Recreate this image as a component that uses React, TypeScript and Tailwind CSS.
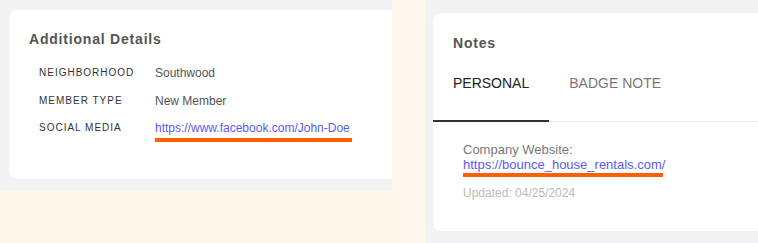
import React from "react";

const font = { fontFamily: '"Liberation Sans", Arial, sans-serif' };

function Row({ label, children }: { label: string; children: React.ReactNode }) {
  return (
    <div className="flex items-start">
      <div className="w-[116px] text-[10px] leading-[16px] tracking-widest text-[#333] uppercase">{label}</div>
      <div className="text-[12px] leading-[16px] text-[#555]">{children}</div>
    </div>
  );
}

export default function App() {
  return (
    <div className="flex w-[758px] h-[243px] bg-[#fff6ec] overflow-hidden" style={font}>
      <div className="w-[392px] shrink-0">
        <div className="h-[190px] bg-[#f3f3f6] pl-[9px] pt-[10px] overflow-hidden">
          <div className="w-[420px] h-[169px] bg-white rounded-lg shadow-[0_0_3px_rgba(0,0,0,0.04)] pl-[20px] pt-[19px]">
            <div className="text-[14px] leading-[20px] font-bold tracking-[0.8px] text-[#555]">Additional Details</div>
            <div className="mt-[16px] pl-[10px] flex flex-col gap-[11.5px]">
              <Row label="Neighborhood">Southwood</Row>
              <Row label="Member Type">New Member</Row>
              <Row label="Social Media">
                <div className="flex flex-col">
                  <span className="text-[#5a5af2]">https://www.facebook.com/John-Doe</span>
                  <div className="mt-[2px] h-[4px] w-[197px] bg-[#ff5f00]" />
                </div>
              </Row>
            </div>
          </div>
        </div>
      </div>
      <div className="w-[33px] shrink-0" />
      <div className="flex-1 bg-[#f3f3f6] pt-[13px] pl-[8px] overflow-hidden">
        <div className="w-[360px] h-[218px] bg-white rounded-lg shadow-[0_0_3px_rgba(0,0,0,0.04)] pt-[20px]">
          <div className="pl-[20px] text-[14px] leading-[20px] font-bold tracking-[0.8px] text-[#555]">Notes</div>
          <div className="flex border-b border-[#e6e6e6]">
            <div className="relative px-[20px] pt-[20px] pb-[28px] text-[14px] leading-[20px] text-[#222]">
              PERSONAL
              <div className="absolute left-0 right-0 bottom-[-1px] h-[2px] bg-[#333]" />
            </div>
            <div className="px-[20px] pt-[20px] pb-[28px] text-[14px] leading-[20px] text-[#777]">BADGE NOTE</div>
          </div>
          <div className="pl-[30px] pt-[20px]">
            <div className="text-[13px] leading-[15px] text-[#777]">Company Website:</div>
            <div className="text-[13px] leading-[15px] text-[#5a5af2]">https://bounce_house_rentals.com/</div>
            <div className="mt-[1px] h-[4px] w-[200px] bg-[#ff5f00]" />
            <div className="mt-[8px] text-[12px] leading-[16px] text-[#bbb]">Updated: 04/25/2024</div>
          </div>
        </div>
      </div>
    </div>
  );
}
